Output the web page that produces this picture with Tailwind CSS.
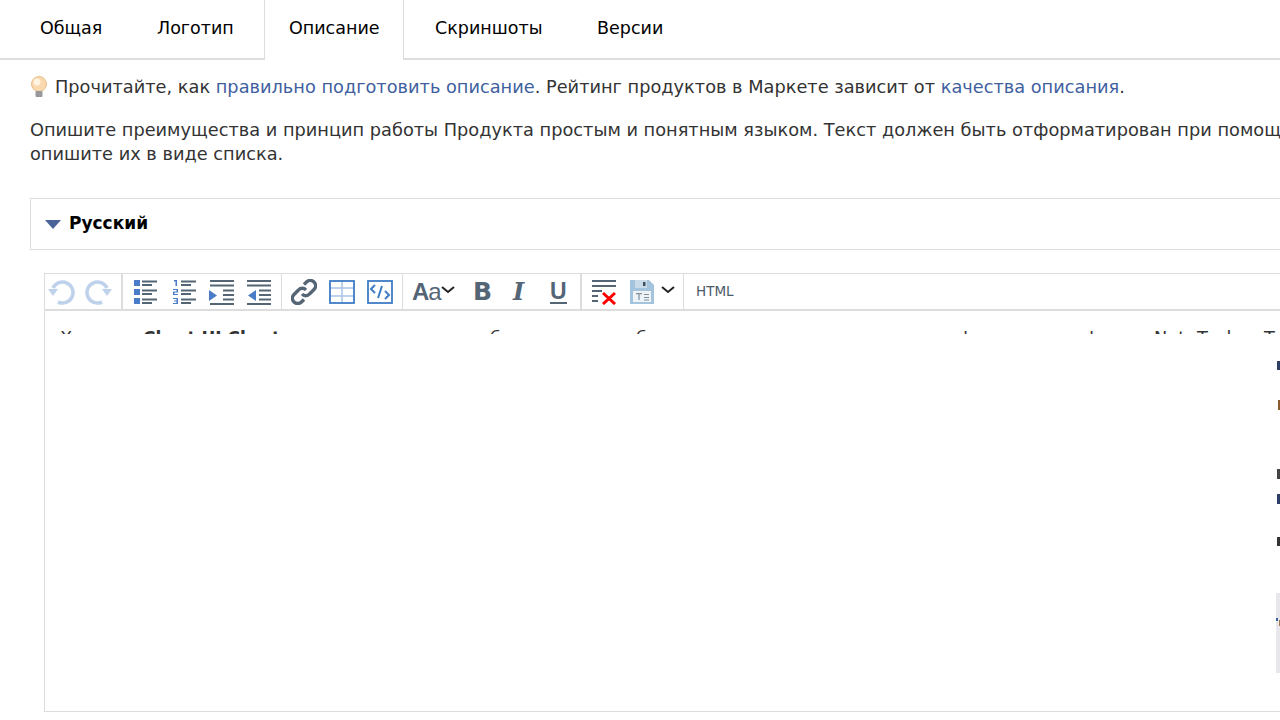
<!DOCTYPE html>
<html lang="ru">
<head>
    <meta charset="UTF-8">
    <title>Описание</title>
    <script src="https://cdn.jsdelivr.net/npm/@tailwindcss/browser@4"></script>
</head>
<body class="bg-white font-['DejaVu_Sans',sans-serif] text-[#333] overflow-hidden h-[720px] w-[1280px] relative">

    <!-- Tabs -->
    <div class="flex h-[60px] pl-[12px] border-b-2 border-[#ddd] text-[17.500px] text-black whitespace-nowrap">
        <div class="w-[117px] pl-[28px] pt-[15px]">Общая</div>
        <div class="w-[135px] pl-[28px] pt-[15px]">Логотип</div>
        <div class="w-[140px] pl-[24px] pt-[15px] h-[60px] bg-white border-x border-[#ddd]">Описание</div>
        <div class="w-[162px] pl-[31px] pt-[15px]">Скриншоты</div>
        <div class="pl-[31px] pt-[15px]">Версии</div>
    </div>

    <!-- Hint -->
    <div class="pl-[30px] w-[1280px] overflow-hidden text-[17.750px] whitespace-nowrap">
        <p class="flex items-center h-[24px] mt-[15px]">
            <svg class="w-[18px] h-[22px] mr-[7px]" viewBox="0 0 18 22">
                <circle cx="9" cy="8" r="7.5" fill="#fbd9ae" stroke="#e6c08c"/>
                <circle cx="7" cy="6" r="3.5" fill="#fff3e2"/>
                <rect x="5.5" y="15" width="7" height="6" rx="1" fill="#999"/>
            </svg>
            <span>Прочитайте, как <span class="text-[#3f5f9f]">правильно подготовить описание</span>. Рейтинг продуктов в Маркете зависит от <span class="text-[#3f5f9f]">качества описания</span>.</span>
        </p>
        <p class="mt-[19px] leading-[24px]">Опишите преимущества и принцип работы Продукта простым и понятным языком. Текст должен быть отформатирован при помощи тегов,<br>опишите их в виде списка.</p>
    </div>

    <!-- Language accordion -->
    <div class="ml-[30px] mt-[32px] h-[52px] border border-r-0 border-[#ddd] flex items-center pl-[14px]">
        <span class="w-0 h-0 border-x-[8px] border-x-transparent border-t-[9px] border-t-[#4a6499] mr-[8px]"></span>
        <span class="text-[17px] font-bold text-black">Русский</span>
    </div>

    <!-- Editor -->
    <div class="ml-[44px] mt-[23px] h-[439px] border border-r-0 border-[#ddd]">

        <!-- Toolbar -->
        <div class="flex h-[37px] border-b-2 border-[#ddd] text-[#546675]">

            <!-- undo / redo -->
            <div class="flex w-[78px] items-center border-r-2 border-[#ddd] pl-[3px]">
                <svg class="w-[28px] h-[28px] mr-[8px] -mt-[2px]" viewBox="0 0 28 28" fill="none">
                    <path d="M10 25 A10.500 10.500 0 1 0 5 11" stroke="#bfd2eb" stroke-width="3.600"/>
                    <path d="M0 12 H10 L5 19 Z" fill="#bfd2eb"/>
                </svg>
                <svg class="w-[28px] h-[28px] -mt-[2px]" viewBox="0 0 28 28" fill="none">
                    <path d="M18 25 A10.500 10.500 0 1 1 23 11" stroke="#bfd2eb" stroke-width="3.600"/>
                    <path d="M28 12 H18 L23 19 Z" fill="#bfd2eb"/>
                </svg>
            </div>

            <!-- lists -->
            <div class="flex w-[159px] items-center border-r border-[#ddd] pl-[10px]">
                <svg class="w-[26px] h-[26px] mr-[13px]" viewBox="0 0 26 26" fill="none">
                    <path d="M1 1h6v6H1zM1 10h6v6H1zM1 19h6v6H1z" fill="#4a7cc7"/>
                    <path d="M9 2.500h15M9 6h10M9 11.500h15M9 15h10M9 20.500h15M9 24h10" stroke="#546675" stroke-width="1.800"/>
                </svg>
                <svg class="w-[26px] h-[26px] mr-[10px]" viewBox="0 0 26 26" fill="none">
                    <path d="M2 1h3v6H3.500V2.500H2zM1 10h5v3.500H2.500V15H6v1H1v-3.500h3.500V11H1zM1 19h5v6H1v-1h3.500v-1.500H2v-1h2.500V20H1z" fill="#4a7cc7"/>
                    <path d="M9 2.500h15M9 6h10M9 11.500h15M9 15h10M9 20.500h15M9 24h10" stroke="#546675" stroke-width="1.800"/>
                </svg>
                <svg class="w-[26px] h-[26px] mr-[12px]" viewBox="0 0 26 26" fill="none">
                    <path d="M2 2h24M2 6.500h24M15 11.500h11M15 16h11M15 20.500h11M2 25h24" stroke="#546675" stroke-width="1.800"/>
                    <path d="M1 11 L9 16.500 L1 22 Z" fill="#4a7cc7"/>
                </svg>
                <svg class="w-[26px] h-[26px]" viewBox="0 0 26 26" fill="none">
                    <path d="M1 2h24M1 6.500h24M13 11.500h12M13 16h12M13 20.500h12M1 25h24" stroke="#546675" stroke-width="1.800"/>
                    <path d="M10 11 L2 16.500 L10 22 Z" fill="#4a7cc7"/>
                </svg>
            </div>

            <!-- link / table / code -->
            <div class="flex w-[121px] items-center border-r border-[#ddd] pl-[9px]">
                <svg class="w-[26px] h-[26px] mr-[12px]" viewBox="0 0 26 26" fill="none" stroke="#546675" stroke-width="3.400">
                    <path d="M11 15 a5 5 0 0 0 7.500 0 l4.500 -4.500 a5 5 0 0 0 -7.500 -7.500 l-2.500 2.500"/>
                    <path d="M15 11 a5 5 0 0 0 -7.500 0 l-4.500 4.500 a5 5 0 0 0 7.500 7.500 l2.500 -2.500"/>
                </svg>
                <svg class="w-[26px] h-[24px] mr-[12px]" viewBox="0 0 26 24" fill="none">
                    <path d="M1 8h24M1 16h24M13 1v22" stroke="#a8c4e6" stroke-width="1.500"/>
                    <rect x="1" y="1" width="24" height="22" stroke="#3d7cc4" stroke-width="1.800"/>
                </svg>
                <svg class="w-[26px] h-[24px]" viewBox="0 0 26 24" fill="none">
                    <rect x="1" y="1" width="24" height="22" stroke="#3d7cc4" stroke-width="1.800"/>
                    <path d="M8 5 L4 9 L8 13M18 11 L22 15 L18 19M15 6 L11 18" stroke="#3d7cc4" stroke-width="2"/>
                </svg>
            </div>

            <!-- font -->
            <div class="flex w-[179px] items-center border-r-2 border-[#ddd] pl-[9px] font-['Liberation_Sans',sans-serif] whitespace-nowrap">
                <span class="w-[29px] text-[24px] tracking-[-1px] leading-none"><b>A</b>a</span>
                <svg class="w-[14px] h-[8px] mr-[18px] -mt-[3px]" viewBox="0 0 14 8" fill="none" stroke="#222" stroke-width="2"><path d="M1 1 L7 6 L13 1"/></svg>
                <span class="w-[40px] text-[25px] font-bold leading-none font-['DejaVu_Sans',sans-serif]">B</span>
                <span class="w-[37px] text-[24px] font-bold italic leading-none font-['DejaVu_Serif',serif]">I</span>
                <span class="text-[23px] leading-[22px] border-b-2 border-[#546675] font-bold">U</span>
            </div>

            <!-- clear / save -->
            <div class="flex w-[102px] items-center border-r border-[#ddd] pl-[9px]">
                <svg class="w-[26px] h-[26px] mr-[13px]" viewBox="0 0 26 26" fill="none">
                    <path d="M1 2h24M1 7h24M1 12h10M1 17h6M1 22h6" stroke="#546675" stroke-width="1.800"/>
                    <path d="M12 14 L24 25M24 14 L12 25" stroke="#f00" stroke-width="3"/>
                </svg>
                <svg class="w-[24px] h-[24px] mr-[7px]" viewBox="0 0 24 24">
                    <path d="M0 0h19l5 5v19H0z" fill="#a4c3dd"/>
                    <path d="M5 0h12v8H5z" fill="#c9dbe9"/>
                    <path d="M13 2h2.500v4H13z" fill="#3f5060"/>
                    <path d="M3 11h18v11H3z" fill="#eef3f7"/>
                    <path d="M6 13h6v1.200H9.600V20H8.400V14.200H6zM14 14h5v1h-5zM14 17h5v1h-5zM14 19.500h5v1h-5z" fill="#7f8f9c"/>
                </svg>
                <svg class="w-[14px] h-[8px] -mt-[3px]" viewBox="0 0 14 8" fill="none" stroke="#222" stroke-width="2"><path d="M1 1 L7 6 L13 1"/></svg>
            </div>

            <div class="flex items-center pl-[12px] text-[13.500px] text-[#4a5a68]">HTML</div>
        </div>

        <!-- Editor content, only the top of the first line shows -->
        <div class="h-[23px] overflow-hidden whitespace-nowrap text-[17.750px] leading-[24px] text-[#333] pt-[15px] pl-[15px] flex">
            <span class="w-[83px] shrink-0">Хотите</span>
            <b class="w-[347px] shrink-0 text-[17px]">Chart UI Chart</b>
            <span class="w-[146px] shrink-0">б</span>
            <span class="w-[322px] shrink-0">б</span>
            <span class="w-[126px] shrink-0">ф</span>
            <span class="w-[70px] shrink-0">ф</span>
            <span class="w-[43px] shrink-0">Net</span>
            <span class="w-[67px] shrink-0">Tools</span>
            <span>T</span>
        </div>
    </div>

    <!-- Bits of the page that stick in from the right edge -->
    <div class="absolute left-[1276px] top-[593px] w-[4px] h-[80px] bg-[#e8e8ec]"></div>
    <div class="absolute left-[1277px] top-[361px] w-[3px] h-[9px] bg-[#2d3f66]"></div>
    <div class="absolute left-[1278px] top-[400px] w-[2px] h-[10px] bg-[#8a5a2a]"></div>
    <div class="absolute left-[1277px] top-[469px] w-[3px] h-[10px] bg-[#444]"></div>
    <div class="absolute left-[1277px] top-[494px] w-[3px] h-[10px] bg-[#2d3f66]"></div>
    <div class="absolute left-[1277px] top-[537px] w-[3px] h-[9px] bg-[#333]"></div>
    <div class="absolute left-[1276px] top-[618px] w-[2px] h-[3px] bg-[#3f5f9f]"></div>
    <div class="absolute left-[1279px] top-[620px] w-[1px] h-[6px] bg-[#a07a50]"></div>
</body>
</html>
